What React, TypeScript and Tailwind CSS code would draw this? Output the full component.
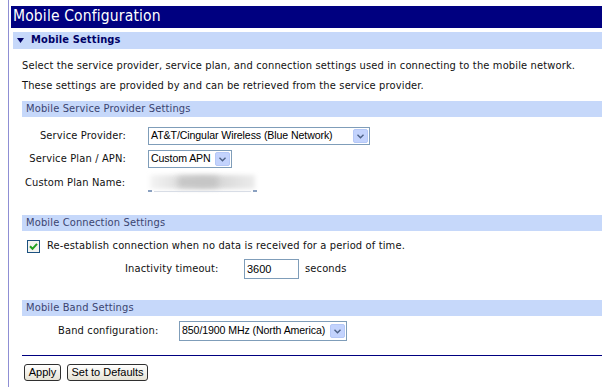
import React from "react";

const Chevron = () => (
  <svg width="7" height="5" viewBox="0 0 7 5">
    <path d="M0.5 0.8 L3.5 3.8 L6.5 0.8" stroke="#4d6185" strokeWidth="1.4" fill="none" />
  </svg>
);

const Select = ({ text, w }: { text: string; w: string }) => (
  <div className={`${w} h-[18px] border border-[#7f9db9] bg-white flex items-center justify-between pl-[2px] pr-[1px] font-['Liberation_Sans',Arial,sans-serif] text-[10.6px] tracking-[-0.1px] text-black`}>
    <span className="whitespace-nowrap">{text}</span>
    <div className="w-[15px] h-[14px] bg-[#c3d3fd] border border-[#b5c8f7] rounded-[2px] flex items-center justify-center shrink-0">
      <Chevron />
    </div>
  </div>
);

const SubBar = ({ children }: { children: React.ReactNode }) => (
  <div className="h-[16px] bg-[#c6d8fa] flex items-center pl-[4px] text-[#3b4470]">{children}</div>
);

const Button = ({ children, w }: { children: React.ReactNode; w: string }) => (
  <div className={`${w} h-[17px] border border-[#2f2f2f] rounded-[3px] bg-gradient-to-b from-[#ffffff] to-[#e6e3d6] flex items-center justify-center font-['Liberation_Sans',Arial,sans-serif] text-[11px] tracking-normal text-black`}>
    {children}
  </div>
);

export default function App() {
  return (
    <div className="w-[602px] h-[387px] bg-white overflow-hidden pl-[8px] font-['DejaVu_Sans_Condensed','DejaVu_Sans',sans-serif] text-[11px] text-[#111] tracking-[0.15px]">
      <div className="h-full border-l border-[#8f8fd4] pl-[2px] pt-[6px]">
        <div className="h-[22px] bg-[#000080] text-white text-[15.5px] pl-[2px] flex items-center leading-none">
          Mobile Configuration
        </div>
        <div className="ml-[2px] mt-[4px] h-[17px] bg-[#c6d8fa] flex items-center pl-[4px] gap-[7px] font-bold text-[#000066]">
          <svg width="7" height="5" viewBox="0 0 7 5">
            <path d="M0 0 L7 0 L3.5 5 Z" fill="#000066" />
          </svg>
          <span>Mobile Settings</span>
        </div>
        <div className="pl-[11px]">
          <div className="mt-[7px] leading-[20px]">
            <div>Select the service provider, service plan, and connection settings used in connecting to the mobile network.</div>
            <div>These settings are provided by and can be retrieved from the service provider.</div>
          </div>

          <div className="mt-[5px]">
            <SubBar>Mobile Service Provider Settings</SubBar>
          </div>

          <div className="mt-[10px] flex items-center">
            <div className="w-[126px] text-right pr-[22px] whitespace-nowrap">Service Provider:</div>
            <Select text="AT&T/Cingular Wireless (Blue Network)" w="w-[222px]" />
          </div>
          <div className="mt-[5px] flex items-center">
            <div className="w-[126px] text-right pr-[22px] whitespace-nowrap">Service Plan / APN:</div>
            <Select text="Custom APN" w="w-[84px]" />
          </div>
          <div className="mt-[6px] flex items-center">
            <div className="w-[126px] pl-[3px] whitespace-nowrap">Custom Plan Name:</div>
            <div className="relative w-[109px] h-[18px]">
              <div className="absolute left-[2px] right-[2px] top-[1px] bottom-[3px] blur-[2px] bg-gradient-to-r from-[#f4f4f4] via-[#cfcfcf] to-[#ececec]" />
              <div className="absolute left-[30px] w-[40px] top-[3px] h-[10px] blur-[3px] bg-[#c4c4c4]" />
              <div className="absolute left-0 bottom-0 w-[4px] h-[2px] bg-[#8aa0c0]" />
              <div className="absolute right-0 bottom-0 w-[4px] h-[2px] bg-[#8aa0c0]" />
              <div className="absolute left-[6px] right-[6px] bottom-0 h-[1px] bg-[#d8dde6]" />
            </div>
          </div>

          <div className="mt-[23px]">
            <SubBar>Mobile Connection Settings</SubBar>
          </div>

          <div className="mt-[8px] flex items-center h-[14px] pl-[5px] gap-[7px]">
            <div className="w-[13px] h-[13px] border border-[#1c5180] bg-[#f4f4f0] flex items-center justify-center">
              <svg width="9" height="9" viewBox="0 0 9 9">
                <path d="M1 4.2 L3.5 6.8 L8 1.8" stroke="#21a121" strokeWidth="2" fill="none" />
              </svg>
            </div>
            <span>Re-establish connection when no data is received for a period of time.</span>
          </div>
          <div className="mt-[6px] flex items-center">
            <div className="w-[222px] pl-[103px] whitespace-nowrap">Inactivity timeout:</div>
            <div className="w-[55px] h-[20px] border border-[#7f9db9] flex items-center pl-[2px] font-['Liberation_Sans',Arial,sans-serif] text-[11px] tracking-normal text-black">
              3600
            </div>
            <span className="ml-[6px]">seconds</span>
          </div>

          <div className="mt-[21px]">
            <SubBar>Mobile Band Settings</SubBar>
          </div>

          <div className="mt-[5px] flex items-center">
            <div className="w-[157px] pl-[36px] whitespace-nowrap">Band configuration:</div>
            <Select text="850/1900 MHz (North America)" w="w-[168px] h-[20px]" />
          </div>

          <div className="mt-[14px] h-[1px] bg-[#000080]" />

          <div className="mt-[8px] flex items-center gap-[6px] pl-[2px]">
            <Button w="w-[37px]">Apply</Button>
            <Button w="w-[81px]">Set to Defaults</Button>
          </div>
        </div>
      </div>
    </div>
  );
}
